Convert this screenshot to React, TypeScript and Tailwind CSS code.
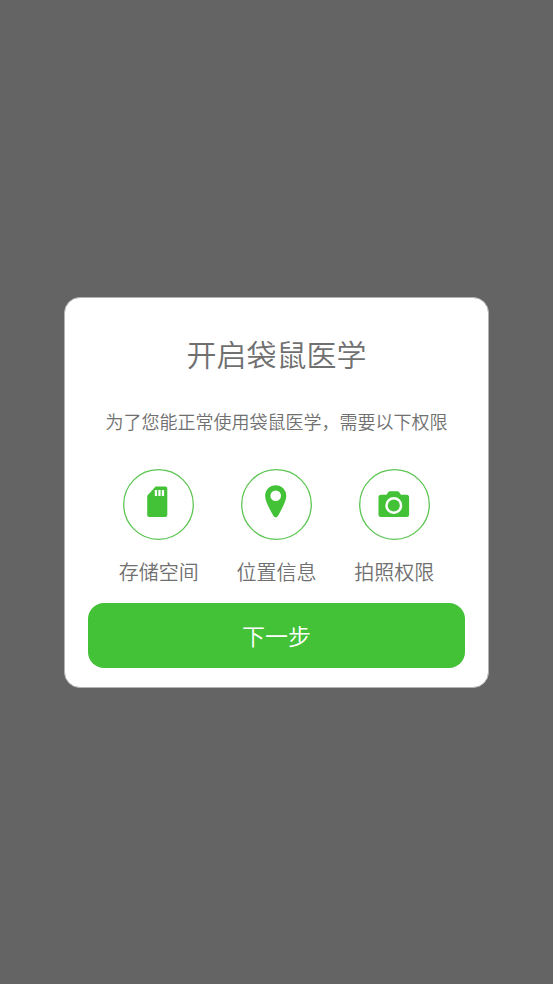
import type { ReactNode } from 'react';

interface Permission {
  id: string;
  label: string;
  icon: ReactNode;
}

// icons share the 71x71 box of the round outline
const permissions: Permission[] = [
  {
    id: 'storage',
    label: '存储空间',
    icon: (
      <path
        fillRule="evenodd"
        d="M32.6 17.5H42.3a2 2 0 0 1 2 2V46a2 2 0 0 1-2 2H26.2a2 2 0 0 1-2-2V26.7ZM31.8 21v6h2.3v-6ZM35.3 21v6h2.3v-6ZM38.8 21v6h2.3v-6Z"
      />
    ),
  },
  {
    id: 'location',
    label: '位置信息',
    icon: (
      <path
        fillRule="evenodd"
        d="M34.7 16.2a10.6 10.6 0 0 1 10.6 10.6c0 6-5.2 14.2-8.4 20.2-1.1 1.8-3.3 1.8-4.4 0-3.2-6-8.4-14.2-8.4-20.2a10.6 10.6 0 0 1 10.6-10.6Zm0 5.3a5.3 5.3 0 1 0 0 10.6 5.3 5.3 0 0 0 0-10.6Z"
      />
    ),
  },
  {
    id: 'camera',
    label: '拍照权限',
    icon: (
      <>
        <path
          fillRule="evenodd"
          d="M30.6 22.3h8.2a1.5 1.5 0 0 1 1.2.6l2 2.8h5.6a2.5 2.5 0 0 1 2.5 2.5v17.3a2.5 2.5 0 0 1-2.5 2.5H22a2.5 2.5 0 0 1-2.5-2.5V28.2a2.5 2.5 0 0 1 2.5-2.5h5.4l2-2.8a1.5 1.5 0 0 1 1.2-.6ZM34.8 28a8.5 8.5 0 1 0 0 17 8.5 8.5 0 0 0 0-17Z"
        />
        <circle cx="34.8" cy="36.5" r="6" />
      </>
    ),
  },
];

export default function App() {
  return (
    <main className="flex min-h-screen items-center justify-center bg-[#646464] px-16 font-['Noto_Sans_CJK_SC',sans-serif] font-[350] text-[#707070]">
      <section
        role="dialog"
        aria-labelledby="permission-title"
        className="w-full max-w-lg rounded-2xl border border-[#b4b4b4] bg-white px-[23px] pt-[35px] pb-[19px]"
      >
        <h1 id="permission-title" className="text-center text-3xl leading-10 font-[350]">
          开启袋鼠医学
        </h1>
        <p className="mt-[34px] text-center text-lg leading-7 whitespace-nowrap">
          为了您能正常使用袋鼠医学，需要以下权限
        </p>

        <ul className="mt-[34px] grid grid-cols-3 px-3">
          {permissions.map((item) => (
            <li key={item.id} className="flex flex-col items-center">
              <svg
                viewBox="0 0 71 71"
                className="size-[71px]"
                fill="#43c238"
                aria-hidden="true"
              >
                <circle cx="35.5" cy="35.5" r="34.8" fill="none" stroke="#5cc552" strokeWidth="1.3" />
                {item.icon}
              </svg>
              <span className="mt-4 text-xl leading-8 whitespace-nowrap">{item.label}</span>
            </li>
          ))}
        </ul>

        <button
          type="button"
          className="mt-[15px] h-[65px] w-full cursor-pointer rounded-2xl bg-[#43c238] text-[23px] text-white"
        >
          下一步
        </button>
      </section>
    </main>
  );
}
